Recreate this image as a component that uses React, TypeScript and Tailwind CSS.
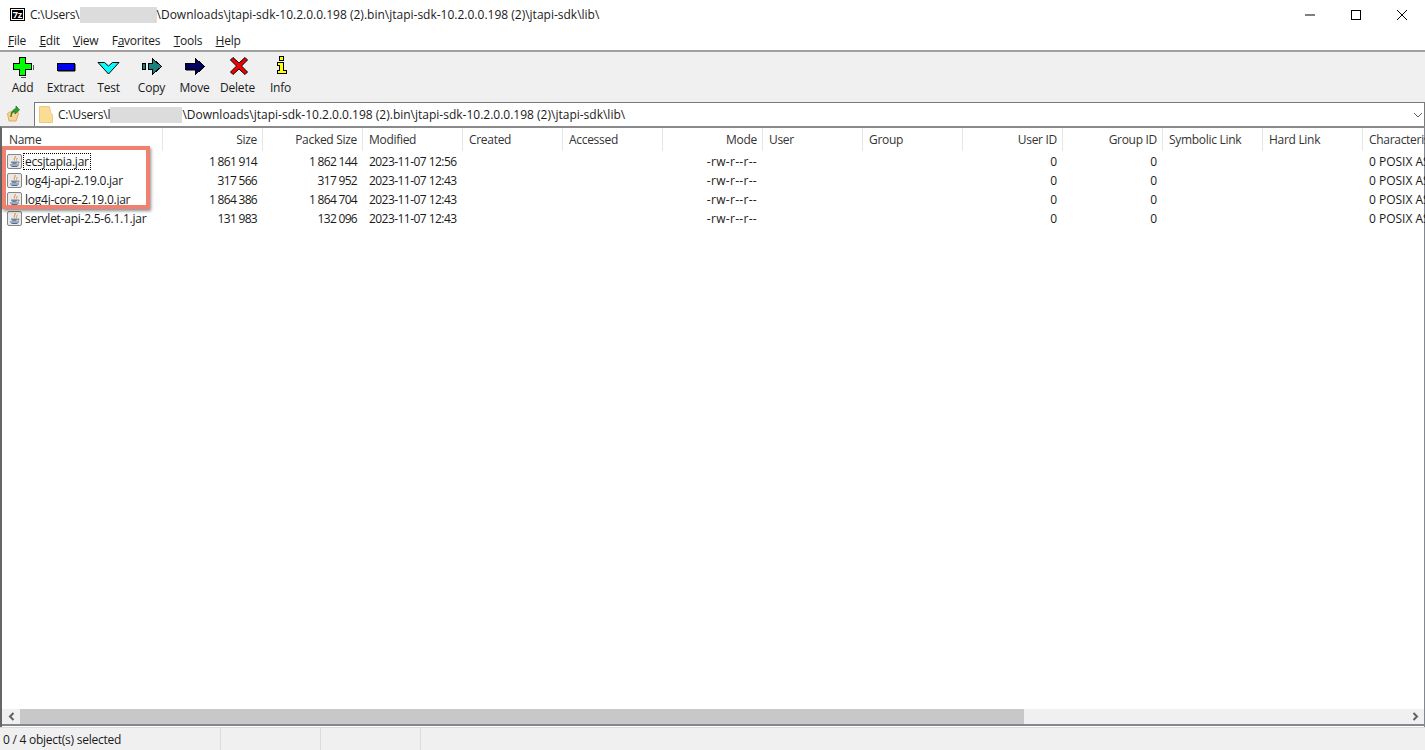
import { ReactNode } from 'react';

const FONT = "font-['Open_Sans','Noto_Sans',sans-serif]";

const menus = [
  { pre: '', key: 'F', post: 'ile' },
  { pre: '', key: 'E', post: 'dit' },
  { pre: '', key: 'V', post: 'iew' },
  { pre: 'F', key: 'a', post: 'vorites' },
  { pre: '', key: 'T', post: 'ools' },
  { pre: '', key: 'H', post: 'elp' },
];

const AddIcon = () => (
  <svg width="22" height="22" viewBox="0 0 22 22" shapeRendering="crispEdges">
    <path d="M14 21h-5M21 14v-5" stroke="#555" />
    <path d="M7.500 1.500h6v6h6v6h-6v6h-6v-6h-6v-6h6z" fill="#00ff00" stroke="#000" />
  </svg>
);

const ExtractIcon = () => (
  <svg width="22" height="22" viewBox="0 0 22 22" shapeRendering="crispEdges">
    <path d="M3 15.500h17M20.500 8v7" stroke="#777" />
    <rect x="2.500" y="7.500" width="17" height="7" fill="#0000f0" stroke="#000" />
  </svg>
);

const TestIcon = () => (
  <svg width="24" height="22" viewBox="0 0 24 22">
    <path d="M1 6.500h6.500l4 3.500 4-3.500H22L11.500 18z" fill="#00ffff" stroke="#000" strokeWidth="1" />
  </svg>
);

const CopyIcon = () => (
  <svg width="24" height="22" viewBox="0 0 24 22" shapeRendering="crispEdges">
    <rect x="2.500" y="7.500" width="3" height="6" fill="#1a8080" stroke="#000" />
    <path d="M8.500 7.500h4v-5l9 8-9 8v-5h-4z" fill="#1a8080" stroke="#000" />
  </svg>
);

const MoveIcon = () => (
  <svg width="24" height="22" viewBox="0 0 24 22" shapeRendering="crispEdges">
    <path d="M2.500 7.500h10v-5l9 8-9 8v-5h-10z" fill="#000060" stroke="#000" />
    <path d="M3 14.500h9" stroke="#777" />
  </svg>
);

const DeleteIcon = () => (
  <svg width="22" height="22" viewBox="0 0 22 22">
    <path d="M6 1.500l6 5.500 6-5.500 2.500 2.500-6 6 6 6-2.500 2.500-6-5.500-6 5.500L3.500 16l6-6-6-6z" fill="#f00000" stroke="#000" strokeWidth="1" />
  </svg>
);

const InfoIcon = () => (
  <svg width="22" height="22" viewBox="0 0 22 22" shapeRendering="crispEdges">
    <rect x="9.500" y="0.500" width="4" height="4" fill="#ffff00" stroke="#000" />
    <path d="M7.500 6.500h6v8h3v3h-9v-3h2v-5h-2z" fill="#ffff00" stroke="#000" />
  </svg>
);

const tools: { label: string; icon: ReactNode }[] = [
  { label: 'Add', icon: <AddIcon /> },
  { label: 'Extract', icon: <ExtractIcon /> },
  { label: 'Test', icon: <TestIcon /> },
  { label: 'Copy', icon: <CopyIcon /> },
  { label: 'Move', icon: <MoveIcon /> },
  { label: 'Delete', icon: <DeleteIcon /> },
  { label: 'Info', icon: <InfoIcon /> },
];

const columns = [
  { name: 'Name', cls: 'w-[161px] pl-[7px] text-left' },
  { name: 'Size', cls: 'w-[100px] pr-[5px] text-right' },
  { name: 'Packed Size', cls: 'w-[100px] pr-[5px] text-right' },
  { name: 'Modified', cls: 'w-[100px] pl-[6px] text-left' },
  { name: 'Created', cls: 'w-[100px] pl-[6px] text-left' },
  { name: 'Accessed', cls: 'w-[100px] pl-[6px] text-left' },
  { name: 'Mode', cls: 'w-[100px] pr-[5px] text-right' },
  { name: 'User', cls: 'w-[100px] pl-[6px] text-left' },
  { name: 'Group', cls: 'w-[100px] pl-[6px] text-left' },
  { name: 'User ID', cls: 'w-[100px] pr-[5px] text-right' },
  { name: 'Group ID', cls: 'w-[100px] pr-[5px] text-right' },
  { name: 'Symbolic Link', cls: 'w-[100px] pl-[6px] text-left' },
  { name: 'Hard Link', cls: 'w-[100px] pl-[6px] text-left' },
  { name: 'Characteristics', cls: 'w-[100px] pl-[6px] text-left' },
];

const files = [
  ['ecsjtapia.jar', '1 861 914', '1 862 144', '2023-11-07 12:56'],
  ['log4j-api-2.19.0.jar', '317 566', '317 952', '2023-11-07 12:43'],
  ['log4j-core-2.19.0.jar', '1 864 386', '1 864 704', '2023-11-07 12:43'],
  ['servlet-api-2.5-6.1.1.jar', '131 983', '132 096', '2023-11-07 12:43'],
];

const JarIcon = () => (
  <svg width="15" height="15" viewBox="0 0 15 15" className="shrink-0">
    <rect x="0.500" y="0.500" width="14" height="14" rx="1.500" fill="#e9e9e9" stroke="#858585" />
    <path d="M8 2c1.500 1.500-2 2.500-.5 4.500M10 4c.5 1-1 1.500-.5 2.500" fill="none" stroke="#e8862a" strokeWidth="1" />
    <path d="M4 7.500h6.500c0 1.500-1 2.500-2 2.500H6c-1 0-2-1-2-2.500z" fill="#6f86a3" />
    <path d="M10.500 8h1.500v1h-1.500" fill="none" stroke="#5b7491" strokeWidth="0.800" />
    <path d="M3 11h9M4.500 12.500h6" stroke="#4f6b8c" strokeWidth="1" />
  </svg>
);

const sizeCls = 'w-[100px] shrink-0 pr-[6px] text-right tracking-[-0.7px]';

const FileRow = ({ row, focused }: { row: string[]; focused: boolean }) => (
  <div className="flex h-[19px] items-center whitespace-nowrap">
    <div className="flex w-[161px] shrink-0 items-center pl-[5px]">
      <JarIcon />
      <span className={`ml-[1px] px-[2px] leading-[17px] tracking-[-0.25px] ${focused ? 'outline-1 outline-dotted outline-offset-[-1px] outline-black' : ''}`}>
        {row[0]}
      </span>
    </div>
    <div className={sizeCls}>{row[1]}</div>
    <div className={sizeCls}>{row[2]}</div>
    <div className="w-[100px] shrink-0 pl-[6px] tracking-[-0.55px]">{row[3]}</div>
    <div className="w-[200px] shrink-0" />
    <div className="w-[100px] shrink-0 pr-[6px] text-right tracking-[0.3px]">-rw-r--r--</div>
    <div className="w-[200px] shrink-0" />
    <div className="w-[100px] shrink-0 pr-[6px] text-right">0</div>
    <div className="w-[100px] shrink-0 pr-[6px] text-right">0</div>
    <div className="w-[200px] shrink-0" />
    <div className="w-[100px] shrink-0 pl-[6px]">0 POSIX ASCII</div>
  </div>
);

export default function App() {
  return (
    <div className={`relative flex h-[750px] w-[1425px] flex-col overflow-hidden bg-white text-[12px] text-[#1a1a1a] ${FONT}`}>
      {/* Title bar */}
      <div className="flex h-[31px] shrink-0 items-center pl-[10px] pb-[2px]">
        <div className="flex h-[13px] w-[15px] items-center justify-center border border-black bg-white p-[1px]">
          <span className="flex h-full w-full items-center justify-center bg-black text-[9px] font-bold leading-none text-white">7z</span>
        </div>
        <span className="ml-[5px] tracking-[-0.2px]">C:\Users\</span>
        <span className="h-[16px] w-[77px] bg-[#dcdcdc]" />
        <span>\Downloads\jtapi-sdk-10.2.0.0.198 (2).bin\jtapi-sdk-10.2.0.0.198 (2)\jtapi-sdk\lib\</span>
        <div className="ml-auto flex items-center">
          <svg width="46" height="16" viewBox="0 0 46 16"><path d="M18 8h10" stroke="#000" /></svg>
          <svg width="46" height="16" viewBox="0 0 46 16"><rect x="18.500" y="3.500" width="9" height="9" fill="none" stroke="#000" /></svg>
          <svg width="46" height="16" viewBox="0 0 46 16"><path d="M18 3l10 10M28 3L18 13" stroke="#000" /></svg>
        </div>
      </div>

      {/* Menu */}
      <div className="flex h-[19px] shrink-0 items-center gap-[13.4px] pl-[8px] pt-[1px] tracking-[-0.25px]">
        {menus.map((m) => (
          <span key={m.key + m.post}>
            {m.pre}
            <span className="underline">{m.key}</span>
            {m.post}
          </span>
        ))}
      </div>

      {/* Toolbar */}
      <div className="flex h-[52px] shrink-0 border-t-2 border-[#a0a0a0] bg-[#f0f0f0] pl-px tracking-[-0.2px]">
        {tools.map((t) => (
          <div key={t.label} className="flex w-[43px] flex-col items-center pt-[3px]">
            <div className="flex h-[24px] items-center justify-center">{t.icon}</div>
            <span className="mt-[1px] leading-[16px]">{t.label}</span>
          </div>
        ))}
      </div>

      {/* Address */}
      <div className="flex h-[24px] shrink-0 bg-[#f0f0f0]">
        <div className="flex w-[34px] items-center justify-center pr-[6px]">
          <svg width="16" height="18" viewBox="0 0 16 18">
            <path d="M1.500 8.500l2-1.500h8l1 1.500-2.500 7.500H3z" fill="#f8d596" stroke="#e2a95a" />
            <path d="M5 12c0-3 1.500-5 4-5.500V9l4.500-4L10 1v2.500C6.500 4.500 4.500 8 5 12z" fill="#2f9e2a" stroke="#1a6b18" strokeWidth="0.700" />
          </svg>
        </div>
        <div className="flex flex-1 items-center border border-b-0 border-[#7a7a7a] bg-white pl-[4px]">
          <svg width="14" height="17" viewBox="0 0 14 17" className="shrink-0">
            <path d="M.5.500h10l1 6 2 2v8H.5z" fill="#fbdc95" stroke="#ebc987" />
          </svg>
          <span className="ml-[5px] pt-[1px] tracking-[-0.2px]">C:\Users\l</span>
          <span className="h-[16px] w-[72px] bg-[#dcdcdc]" />
          <span className="pt-[1px]">\Downloads\jtapi-sdk-10.2.0.0.198 (2).bin\jtapi-sdk-10.2.0.0.198 (2)\jtapi-sdk\lib\</span>
          <svg width="10" height="6" viewBox="0 0 10 6" className="ml-auto mr-[1px]">
            <path d="M1 1l4 4 4-4" fill="none" stroke="#606060" />
          </svg>
        </div>
      </div>

      {/* File list */}
      <div className="flex min-h-0 flex-1 flex-col border-t-2 border-l-2 border-r border-t-[#8a8a8a] border-l-[#666] border-r-[#828790]">
        <div className="flex h-[23px] shrink-0 whitespace-nowrap tracking-[-0.3px]">
          {columns.map((c) => (
            <div key={c.name} className={`${c.cls} shrink-0 border-r border-[#e5e5e5] pt-[3px] text-[#333]`}>
              {c.name}
            </div>
          ))}
        </div>
        <div className="min-h-0 flex-1 pt-[1px]">
          {files.map((f, i) => (
            <FileRow key={f[0]} row={f} focused={i === 0} />
          ))}
        </div>
        {/* Horizontal scrollbar */}
        <div className="flex h-[15px] shrink-0 items-center bg-[#f0f0f0]">
          <div className="flex w-[18px] justify-center">
            <svg width="7" height="9" viewBox="0 0 7 9"><path d="M5.500 1L2 4.500 5.500 8" fill="none" stroke="#606060" strokeWidth="2" /></svg>
          </div>
          <div className="h-full w-[1004px] bg-[#c8c8c8]" />
          <div className="ml-auto flex w-[18px] justify-center">
            <svg width="7" height="9" viewBox="0 0 7 9"><path d="M1.500 1L5 4.500 1.500 8" fill="none" stroke="#606060" strokeWidth="2" /></svg>
          </div>
        </div>
        <div className="h-[3px] shrink-0 border-t-2 border-[#828790] bg-white" />
      </div>

      {/* Status bar */}
      <div className="flex h-[23px] shrink-0 items-center border-t border-[#dcdcdc] bg-[#f0f0f0]">
        <div className="h-full w-[221px] border-r border-[#dcdcdc] pl-[3px] pt-[1px] leading-[22px] tracking-[-0.25px]">0 / 4 object(s) selected</div>
        <div className="h-full w-[100px] border-r border-[#dcdcdc]" />
        <div className="h-full w-[100px] border-r border-[#dcdcdc]" />
      </div>

      {/* Red annotation box */}
      <div className="absolute left-[2px] top-[146px] h-[63px] w-[148px] border-[4px] border-[#f08070] shadow-[1px_2px_3px_rgba(0,0,0,0.45)]" />
    </div>
  );
}
